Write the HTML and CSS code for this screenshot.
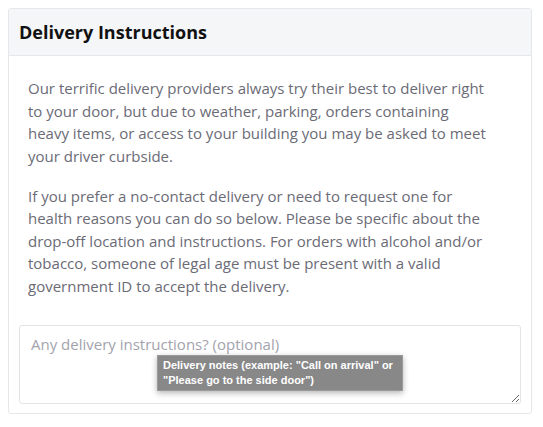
FILE: index.html
```html
<!DOCTYPE html>
<html>
<head>
<meta charset="utf-8">
<link rel="stylesheet" href="styles.css">
</head>
<body>
<section class="card">
  <header class="card-header"><h2 class="card-title">Delivery Instructions</h2></header>
  <div class="card-body">
    <p class="copy">Our terrific delivery providers always try their best to deliver right<br>to your door, but due to weather, parking, orders containing<br>heavy items, or access to your building you may be asked to meet<br>your driver curbside.</p>
    <p class="copy">If you prefer a no-contact delivery or need to request one for<br>health reasons you can do so below. Please be specific about the<br>drop-off location and instructions. For orders with alcohol and/or<br>tobacco, someone of legal age must be present with a valid<br>government ID to accept the delivery.</p>
    <div class="field">
      <textarea class="notes" placeholder="Any delivery instructions? (optional)"></textarea>
      <div class="tooltip">Delivery notes (example: "Call on arrival" or<br>"Please go to the side door")</div>
    </div>
  </div>
</section>
</body>
</html>
```
FILE: styles.css
```css
html, body { margin: 0; padding: 0; background: #fff; }
body { padding: 8px 11px 0 8px; font-family: "Open Sans", Lato, sans-serif; }
.card {
  border: 1px solid #e6e7ea;
  border-radius: 3px;
  width: 524px;
  box-sizing: border-box;
  height: 406px;
  overflow: hidden;
}
.card-header {
  background: #f5f6f8;
  border-bottom: 1px solid #e6e7ea;
  height: 46px;
  display: flex;
  align-items: center;
  padding: 0 10px;
}
.card-title {
  margin: 0;
  font-size: 18px;
  font-weight: 700;
  color: #111;
}
.card-body { padding: 21px 10px 10px 10px; }
.copy {
  margin: 0 4px 17.5px 9px;
  font-size: 15px;
  line-height: 22.5px;
  color: #6b6b76;
  white-space: nowrap;
}
.field { position: relative; margin-top: 28px; }
.notes {
  display: block;
  width: 502px;
  height: 79px;
  box-sizing: border-box;
  border: 1px solid #e3e4e7;
  border-radius: 3px;
  padding: 8px 11px;
  font-family: "Open Sans", sans-serif;
  font-size: 15px;
  resize: vertical;
  outline: none;
}
.notes::placeholder { color: #a3a3ad; }
.tooltip {
  position: absolute;
  left: 138px;
  top: 30px;
  background: #888;
  border: 1px solid #9a9a9a;
  box-shadow: 0 2px 6px rgba(0,0,0,0.3);
  color: #fff;
  font-family: "Liberation Sans", Arial, sans-serif;
  font-weight: 700;
  font-size: 11px;
  line-height: 15px;
  padding: 2px 9px 2px 5px;
  white-space: nowrap;
}
```
